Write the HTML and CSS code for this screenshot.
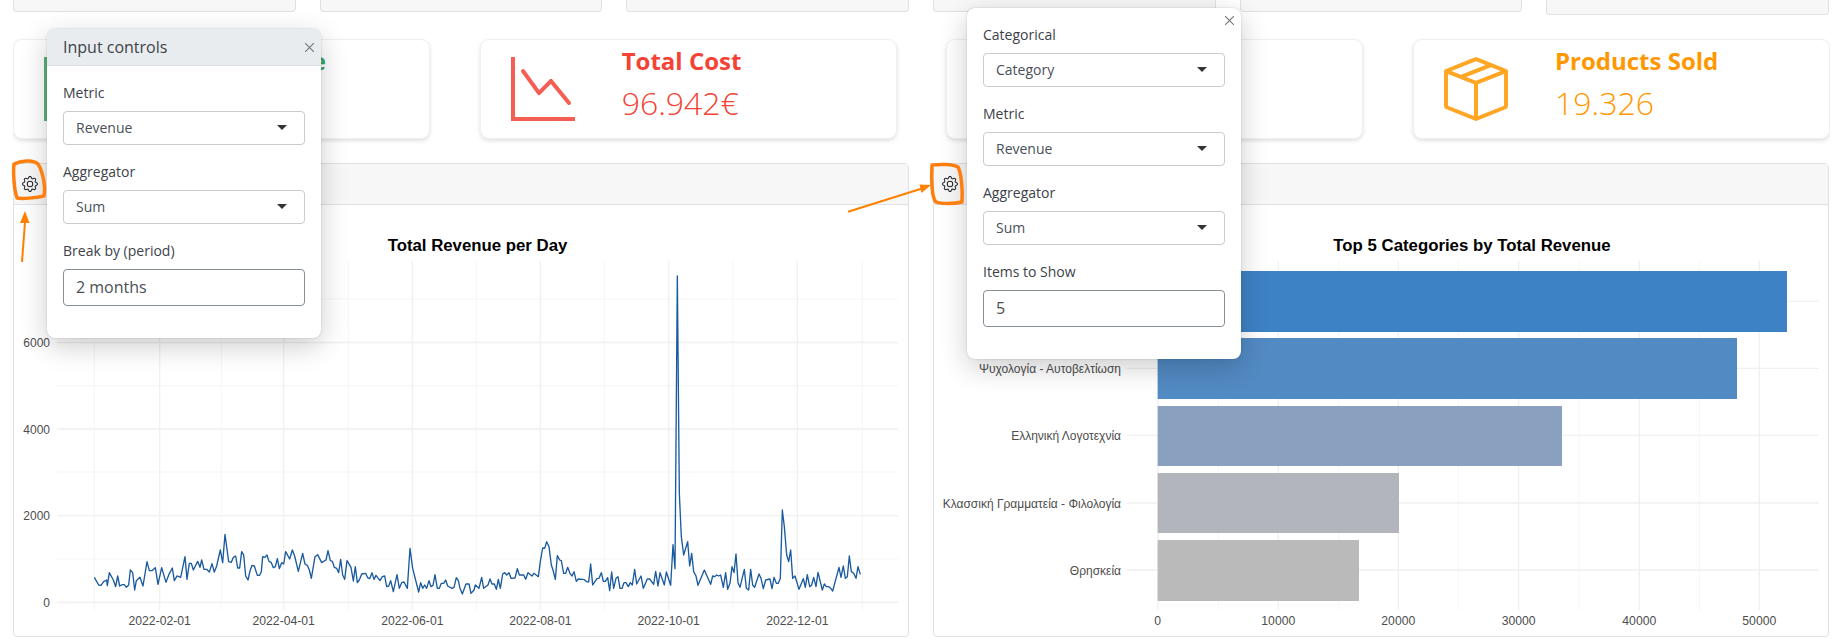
FILE: index.html
```html
<!DOCTYPE html>
<html>

<head>
	<meta charset="UTF-8">
	<title>Sales dashboard</title>
	<link rel="stylesheet" href="styles.css">
</head>

<body>
	<div class="page">
		<div class="top-row">
			<div class="top-card"></div>
			<div class="top-card"></div>
			<div class="top-card"></div>
			<div class="top-card"></div>
			<div class="top-card"></div>
			<div class="top-card top-card-tall"></div>
		</div>

		<div class="value-row">
			<div class="value-box green">
				<svg class="value-icon" viewBox="0 0 16 16" fill="currentColor">
					<path fill-rule="evenodd" d="M0 0h1v15h15v1H0V0Zm10 3.5a.5.5 0 0 1 .5-.5h4a.5.5 0 0 1 .5.5v4a.5.5 0 0 1-1 0V4.9l-3.613 4.417a.5.5 0 0 1-.74.037L7.06 6.767l-3.656 5.027a.5.5 0 0 1-.808-.588l4-5.5a.5.5 0 0 1 .758-.06l2.609 2.61L13.445 4H10.5a.5.5 0 0 1-.5-.5Z" />
				</svg>
				<div class="value-text">
					<div class="value-title">Total Revenue</div>
				</div>
			</div>
			<div class="value-box red">
				<svg class="value-icon" viewBox="0 0 16 16" fill="currentColor">
					<path fill-rule="evenodd" d="M0 0h1v15h15v1H0V0Zm14.817 11.887a.5.5 0 0 0 .07-.704l-4.5-5.5a.5.5 0 0 0-.74-.037L7.06 8.233 3.404 3.206a.5.5 0 0 0-.808.588l4 5.5a.5.5 0 0 0 .758.06l2.609-2.61 4.15 5.073a.5.5 0 0 0 .704.07Z" />
				</svg>
				<div class="value-text">
					<div class="value-title">Total Cost</div>
					<div class="value-number">96.942€</div>
				</div>
			</div>
			<div class="value-box"></div>
			<div class="value-box orange">
				<svg class="value-icon" viewBox="0 0 16 16" fill="currentColor">
					<path d="M8.186 1.113a.5.5 0 0 0-.372 0L1.846 3.5l2.404.961L10.404 2l-2.218-.887zm3.564 1.426L5.596 5 8 5.961 14.154 3.5l-2.404-.961zm3.25 1.7-6.5 2.6v7.922l6.5-2.6V4.24zM7.5 14.762V6.838L1 4.239v7.925l6.5 2.6zM7.443.184a1.5 1.5 0 0 1 1.114 0l7.129 2.852A.5.5 0 0 1 16 3.5v8.662a1 1 0 0 1-.629.928l-7.185 2.874a.5.5 0 0 1-.372 0L.63 13.09a1 1 0 0 1-.63-.928V3.5a.5.5 0 0 1 .314-.464L7.443.184z" />
				</svg>
				<div class="value-text">
					<div class="value-title">Products Sold</div>
					<div class="value-number">19.326</div>
				</div>
			</div>
		</div>

		<div class="chart-row">
			<div class="chart-card">
				<div class="chart-header">
					<svg class="gear" viewBox="0 0 16 16" fill="currentColor">
						<path d="M8 4.754a3.246 3.246 0 1 0 0 6.492 3.246 3.246 0 0 0 0-6.492zM5.754 8a2.246 2.246 0 1 1 4.492 0 2.246 2.246 0 0 1-4.492 0z" />
						<path d="M9.796 1.343c-.527-1.79-3.065-1.79-3.592 0l-.094.319a.873.873 0 0 1-1.255.52l-.292-.16c-1.64-.892-3.433.902-2.54 2.541l.159.292a.873.873 0 0 1-.52 1.255l-.319.094c-1.79.527-1.79 3.065 0 3.592l.319.094a.873.873 0 0 1 .52 1.255l-.16.292c-.892 1.64.901 3.434 2.541 2.54l.292-.159a.873.873 0 0 1 1.255.52l.094.319c.527 1.79 3.065 1.79 3.592 0l.094-.319a.873.873 0 0 1 1.255-.52l.292.16c1.64.893 3.434-.902 2.54-2.541l-.159-.292a.873.873 0 0 1 .52-1.255l.319-.094c1.79-.527 1.79-3.065 0-3.592l-.319-.094a.873.873 0 0 1-.52-1.255l.16-.292c.893-1.64-.902-3.433-2.541-2.54l-.292.159a.873.873 0 0 1-1.255-.52l-.094-.319zm-2.633.283c.246-.835 1.428-.835 1.674 0l.094.319a1.873 1.873 0 0 0 2.693 1.115l.291-.16c.764-.415 1.6.42 1.184 1.185l-.159.292a1.873 1.873 0 0 0 1.116 2.692l.318.094c.835.246.835 1.428 0 1.674l-.319.094a1.873 1.873 0 0 0-1.115 2.693l.16.291c.415.764-.42 1.6-1.185 1.184l-.291-.159a1.873 1.873 0 0 0-2.693 1.116l-.094.318c-.246.835-1.428.835-1.674 0l-.094-.319a1.873 1.873 0 0 0-2.692-1.115l-.292.16c-.764.415-1.6-.42-1.184-1.185l.159-.291A1.873 1.873 0 0 0 1.945 8.93l-.319-.094c-.835-.246-.835-1.428 0-1.674l.319-.094A1.873 1.873 0 0 0 3.06 4.377l-.16-.292c-.415-.764.42-1.6 1.185-1.184l.292.159a1.873 1.873 0 0 0 2.692-1.115l.094-.319z" />
					</svg>
				</div>
				<!-- viewBox uses page coordinates -->
				<svg class="chart" viewBox="14 205 894 431">
					<text class="chart-title" x="477.5" y="251" text-anchor="middle">Total Revenue per Day</text>

					<g class="grid-minor">
						<path d="M57 602.3H898M57 559H898M57 472H898M57 385.7H898M57 299H898" />
						<path d="M94.3 261V610M221.3 261V610M348.3 261V610M476.3 261V610M604.3 261V610M733 261V610M862.3 261V610" />
					</g>
					<g class="grid-major">
						<path d="M57 602.3H898M57 515.7H898M57 429H898M57 342.5H898" />
						<path d="M159.7 261V610M283.7 261V610M412.3 261V610M540.3 261V610M668.7 261V610M797.3 261V610" />
					</g>

					<g class="tick-y" text-anchor="end">
						<text x="50" y="606.5">0</text>
						<text x="50" y="520">2000</text>
						<text x="50" y="433.5">4000</text>
						<text x="50" y="347">6000</text>
					</g>
					<g class="tick-x" text-anchor="middle">
						<text x="159.7" y="625">2022-02-01</text>
						<text x="283.7" y="625">2022-04-01</text>
						<text x="412.3" y="625">2022-06-01</text>
						<text x="540.3" y="625">2022-08-01</text>
						<text x="668.7" y="625">2022-10-01</text>
						<text x="797.3" y="625">2022-12-01</text>
					</g>

					<!-- traced at 3x, so each part has its own offset -->
					<polyline class="line" transform="translate(0 340) scale(.33333)" points="283,712 296,735 303,736 311,725 320,720 322,737 328,698 340,720 347,740 353,708 359,738 367,734 373,734 379,742 386,735 391,690 398,698 404,750 409,722 420,712 429,738 441,665 448,692 456,692 466,683 474,733 485,683 498,727 507,703 517,684 523,722 531,708 542,712 555,650 561,718 568,670 574,670 580,690 593,664 600,682 605,660 612,688 620,688 628,696 636,671 643,696 650,678 661,630 668,668 675,583 686,665 694,667 700,652 707,648 713,684 719,684 725,635 731,645 737,708 744,720 750,693 756,676 763,678 772,706 779,706 784,695 788,650 795,652 801,645 807,664 814,668 820,683 826,680 832,656 838,686 845,668 851,672 857,635 869,657 877,630 884,648 895,694 908,640 915,672 922,676 928,690 934,715 945,650 953,644 965,668 978,660 984,632 991,662 997,664 1003,682 1010,685 1016,698 1022,658 1028,705 1034,718 1041,662 1053,682 1060,723 1066,680 1072,728 1078,720 1085,702 1097,700 1103,713 1109,716 1116,698 1122,718 1128,706 1140,722 1147,710 1154,708 1160,740 1166,738 1172,722 1180,755 1191,704 1198,745 1205,728 1212,726 1222,745 1230,625 1238,685 1256,756 1262,728 1268,745 1274,735 1280,745 1287,722 1293,740 1299,736 1305,704 1312,745 1318,745 1324,730 1331,730 1337,720 1343,738 1356,745 1362,742 1369,713 1375,722 1380,745" />
					<polyline class="line" transform="translate(460 260) scale(.33333)" points="0,985 7,1002 18,972 27,972 33,1000 42,990 46,975 57,985 65,952 71,985 84,975 90,957 96,972 103,972 109,988 115,958 121,985 128,942 134,938 140,945 147,938 153,955 165,954 172,926 178,945 191,945 197,958 204,938 216,948 222,940 235,950 241,905 248,864 254,865 260,845 267,860 274,915 279,930 286,958 292,887 299,900 304,902 311,940 317,940 323,922 330,940 336,948 342,935 349,964 355,957 367,958 373,959 380,965 386,966 392,912 398,975 411,956 417,955 424,938 430,964 436,964 443,953 449,992 455,936 461,985 468,955 474,950 480,985 486,985 492,968 498,968 505,980 511,968 517,975 524,928 530,972 543,948 550,985 562,957 569,957 581,973 587,934 594,978 600,938 613,975 619,936 632,976 639,854 645,926 652,48 658,700 664,830 671,885 683,845 689,918 695,880 701,935 708,948 714,976 733,930 752,973 758,948 764,950 770,945 776,948 782,945 790,982 797,938 803,988 810,970 816,920 822,938 828,882 834,968 840,982 853,928 859,985 866,990 872,928 878,975 884,982 897,942 903,955 910,986 917,960 930,957 936,986 942,952 949,970 955,970 961,955 967,750 973,800 980,885 986,905 992,870 998,955 1005,948 1017,988 1030,956 1036,982 1042,944 1049,980 1055,975 1061,952 1068,980 1074,937 1087,990 1093,972 1099,980 1106,980 1112,985 1118,993 1137,922 1143,952 1150,918 1156,955 1162,950 1168,888 1174,935 1181,940 1188,955 1194,920 1201,943" />
				</svg>
			</div>

			<div class="chart-card">
				<div class="chart-header">
					<svg class="gear" viewBox="0 0 16 16" fill="currentColor">
						<path d="M8 4.754a3.246 3.246 0 1 0 0 6.492 3.246 3.246 0 0 0 0-6.492zM5.754 8a2.246 2.246 0 1 1 4.492 0 2.246 2.246 0 0 1-4.492 0z" />
						<path d="M9.796 1.343c-.527-1.79-3.065-1.79-3.592 0l-.094.319a.873.873 0 0 1-1.255.52l-.292-.16c-1.64-.892-3.433.902-2.54 2.541l.159.292a.873.873 0 0 1-.52 1.255l-.319.094c-1.79.527-1.79 3.065 0 3.592l.319.094a.873.873 0 0 1 .52 1.255l-.16.292c-.892 1.64.901 3.434 2.541 2.54l.292-.159a.873.873 0 0 1 1.255.52l.094.319c.527 1.79 3.065 1.79 3.592 0l.094-.319a.873.873 0 0 1 1.255-.52l.292.16c1.64.893 3.434-.902 2.54-2.541l-.159-.292a.873.873 0 0 1 .52-1.255l.319-.094c1.79-.527 1.79-3.065 0-3.592l-.319-.094a.873.873 0 0 1-.52-1.255l.16-.292c.893-1.64-.902-3.433-2.541-2.54l-.292.159a.873.873 0 0 1-1.255-.52l-.094-.319zm-2.633.283c.246-.835 1.428-.835 1.674 0l.094.319a1.873 1.873 0 0 0 2.693 1.115l.291-.16c.764-.415 1.6.42 1.184 1.185l-.159.292a1.873 1.873 0 0 0 1.116 2.692l.318.094c.835.246.835 1.428 0 1.674l-.319.094a1.873 1.873 0 0 0-1.115 2.693l.16.291c.415.764-.42 1.6-1.185 1.184l-.291-.159a1.873 1.873 0 0 0-2.693 1.116l-.094.318c-.246.835-1.428.835-1.674 0l-.094-.319a1.873 1.873 0 0 0-2.692-1.115l-.292.16c-.764.415-1.6-.42-1.184-1.185l.159-.291A1.873 1.873 0 0 0 1.945 8.93l-.319-.094c-.835-.246-.835-1.428 0-1.674l.319-.094A1.873 1.873 0 0 0 3.06 4.377l-.16-.292c-.415-.764.42-1.6 1.185-1.184l.292.159a1.873 1.873 0 0 0 2.692-1.115l.094-.319z" />
					</svg>
				</div>
				<svg class="chart" viewBox="934 205 894 431">
					<text class="chart-title" x="1472" y="251" text-anchor="middle">Top 5 Categories by Total Revenue</text>

					<g class="grid-minor">
						<path d="M1218.3 261V610M1338.7 261V610M1458.3 261V610M1579 261V610M1699.3 261V610" />
					</g>
					<g class="grid-major">
						<path d="M1126.7 301.3H1818.7M1126.7 368.3H1818.7M1126.7 435.3H1818.7M1126.7 503H1818.7M1126.7 570H1818.7" />
						<path d="M1157.7 261V610M1278.3 261V610M1398.3 261V610M1518.7 261V610M1639.3 261V610M1759.3 261V610" />
					</g>

					<rect x="1157.7" y="271" width="629.3" height="61" fill="#3d82c5" />
					<rect x="1157.7" y="338" width="579.3" height="61" fill="#528ac3" />
					<rect x="1157.7" y="406" width="404.3" height="60" fill="#8aa0bf" />
					<rect x="1157.7" y="473" width="241.3" height="60" fill="#b2b5bc" />
					<rect x="1157.7" y="540" width="201.3" height="61" fill="#bababa" />

					<g class="tick-y" text-anchor="end">
						<text x="1121" y="373">Ψυχολογία - Αυτοβελτίωση</text>
						<text x="1121" y="440">Ελληνική Λογοτεχνία</text>
						<text x="1121" y="507.5">Κλασσική Γραμματεία - Φιλολογία</text>
						<text x="1121" y="575">Θρησκεία</text>
					</g>
					<g class="tick-x" text-anchor="middle">
						<text x="1157.7" y="625">0</text>
						<text x="1278.3" y="625">10000</text>
						<text x="1398.3" y="625">20000</text>
						<text x="1518.7" y="625">30000</text>
						<text x="1639.3" y="625">40000</text>
						<text x="1759.3" y="625">50000</text>
					</g>
				</svg>
			</div>
		</div>
	</div>

	<!-- first popover -->
	<div class="popover popover-left">
		<div class="popover-header">
			<span>Input controls</span>
			<svg class="close" viewBox="0 0 9 9"><path d="M0 0L9 9M9 0L0 9" /></svg>
		</div>
		<div class="popover-body">
			<label>Metric</label>
			<div class="select"><select><option>Revenue</option></select></div>
			<label>Aggregator</label>
			<div class="select"><select><option>Sum</option></select></div>
			<label>Break by (period)</label>
			<input type="text" value="2 months">
		</div>
	</div>

	<!-- second popover -->
	<div class="popover popover-right">
		<svg class="close close-float" viewBox="0 0 9 9"><path d="M0 0L9 9M9 0L0 9" /></svg>
		<div class="popover-body">
			<label>Categorical</label>
			<div class="select"><select><option>Category</option></select></div>
			<label>Metric</label>
			<div class="select"><select><option>Revenue</option></select></div>
			<label>Aggregator</label>
			<div class="select"><select><option>Sum</option></select></div>
			<label>Items to Show</label>
			<input type="text" value="5">
		</div>
	</div>

	<!-- hand drawn marks on top of the screenshot -->
	<svg class="marks" viewBox="0 0 1838 641">
		<path class="mark" d="M14 164C20 161 33 159 38 164C42 170 46 185 44 196C36 198 22 199 17 198C14 190 13 172 14 164Z" />
		<path class="mark-thin" d="M22 262L25 222" />
		<path class="mark-head" d="M25 211L29.5 223L20 223Z" />
		<path class="mark" d="M932 165C940 164 953 164 958 167C961 172 963 190 962 202C954 204 941 204 936 202C932 199 931 180 932 165Z" />
		<path class="mark-thin" d="M848 211.700L922 188.500" />
		<path class="mark-head" d="M931 185L921.500 193L919.500 184.500Z" />
	</svg>
</body>

</html>
```

FILE: styles.css
```css
body {
	margin: 0;
	background: #fff;
	font-family: "Open Sans", sans-serif;
	overflow: hidden;
}

.page {
	width: 1817px;
	height: 641px;
	margin-left: 13px;
	overflow: hidden;
}

/* cut off cards at the very top */
.top-row {
	display: flex;
	gap: 24px;
	width: 1816px;
	height: 15px;
	align-items: flex-start;
}

.top-card {
	flex: 1;
	height: 12px;
	box-sizing: border-box;
	background: #f7f7f8;
	border: 1px solid #dfe1e5;
	border-top: none;
	border-radius: 0 0 4px 4px;
}

.top-card-tall {
	height: 15px;
}

.value-row {
	display: flex;
	justify-content: space-between;
	margin-top: 24px;
}

.value-box {
	display: flex;
	width: 417px;
	height: 100px;
	box-sizing: border-box;
	padding: 17px 30px;
	background: #fff;
	border: 1px solid #f0f0f0;
	border-radius: 9px;
	box-shadow: 0 2px 4px rgba(0, 0, 0, 0.12);
}

.value-icon {
	width: 64px;
	height: 64px;
	flex-shrink: 0;
	opacity: 0.85;
}

.value-text {
	margin-left: 47px;
	margin-top: -11px;
}

.value-title {
	font-size: 24px;
	font-weight: 700;
	line-height: 30px;
	margin-bottom: 5px;
}

.value-number {
	font-size: 32px;
	font-weight: 350;
	line-height: 44px;
}

.green {
	color: #3fa45f;
}

.red {
	color: #f44336;
}

.orange {
	color: #ff9800;
}

.chart-row {
	display: flex;
	gap: 24px;
	width: 1816px;
	margin-top: 24px;
}

.chart-card {
	flex: 1;
	height: 474px;
	box-sizing: border-box;
	border: 1px solid #dfe1e5;
	border-radius: 4px;
	background: #fff;
}

.chart-header {
	display: flex;
	align-items: center;
	height: 40px;
	padding-left: 8px;
	background: #f7f7f8;
	border-bottom: 1px solid #dfe1e5;
	color: #212529;
}

.gear {
	width: 16px;
	height: 16px;
}

.chart {
	display: block;
	width: 894px;
	height: 431px;
	font-family: "Liberation Sans", sans-serif;
}

.chart-title {
	font-size: 16.8px;
	font-weight: 700;
	fill: #000;
}

.tick-y {
	font-size: 12px;
	fill: #4d4d4d;
}

.tick-x {
	font-size: 12.2px;
	fill: #4d4d4d;
}

.grid-major {
	fill: none;
	stroke: #f0f0f0;
	stroke-width: 1.3;
}

.grid-minor {
	fill: none;
	stroke: #f3f3f3;
	stroke-width: 0.8;
}

.line {
	fill: none;
	stroke: #1a5a9e;
	stroke-width: 4;
	stroke-linejoin: round;
}

.popover {
	position: absolute;
	width: 274px;
	box-sizing: border-box;
	background: #fff;
	border-radius: 8px;
	box-shadow: 0 8px 28px rgba(0, 0, 0, 0.2), 0 0 2px rgba(0, 0, 0, 0.2);
	color: #3c4249;
	font-size: 14px;
}

.popover-left {
	left: 47px;
	top: 29px;
}

.popover-right {
	left: 967px;
	top: 8px;
}

.popover-header {
	display: flex;
	justify-content: space-between;
	align-items: center;
	height: 36px;
	padding: 0 7px 0 16px;
	background: #e9ecef;
	border-bottom: 1px solid #dbdfe3;
	border-radius: 8px 8px 0 0;
	font-size: 16px;
}

.close {
	width: 9px;
	height: 9px;
	fill: none;
	stroke: #70757a;
	stroke-width: 1.1;
}

.close-float {
	position: absolute;
	right: 7px;
	top: 8px;
}

.popover-body {
	display: flex;
	flex-direction: column;
	padding: 16px;
}

label {
	line-height: 21px;
	margin-bottom: 8px;
}

.select {
	position: relative;
	margin-bottom: 16.500px;
}

.select::after {
	content: "";
	position: absolute;
	right: 18px;
	top: 14px;
	border-left: 5px solid transparent;
	border-right: 5px solid transparent;
	border-top: 5px solid #333;
}

select {
	display: block;
	width: 100%;
	height: 33.500px;
	box-sizing: border-box;
	appearance: none;
	padding: 0 12px;
	font-family: inherit;
	font-size: 14px;
	color: #495057;
	background: #fff;
	border: 1px solid #c9ccd0;
	border-radius: 4px;
}

input {
	display: block;
	width: 100%;
	height: 36.500px;
	box-sizing: border-box;
	margin-bottom: 16px;
	padding: 0 12px;
	font-family: inherit;
	font-size: 16px;
	color: #495057;
	background: #fff;
	border: 1px solid #868e96;
	border-radius: 4px;
}

.marks {
	position: absolute;
	left: 0;
	top: 0;
	width: 1838px;
	height: 641px;
	pointer-events: none;
}

.mark {
	fill: none;
	stroke: #ff7f0e;
	stroke-width: 3.500;
	stroke-linejoin: round;
}

.mark-thin {
	fill: none;
	stroke: #ff8000;
	stroke-width: 2;
}

.mark-head {
	fill: #ff8000;
}
```
